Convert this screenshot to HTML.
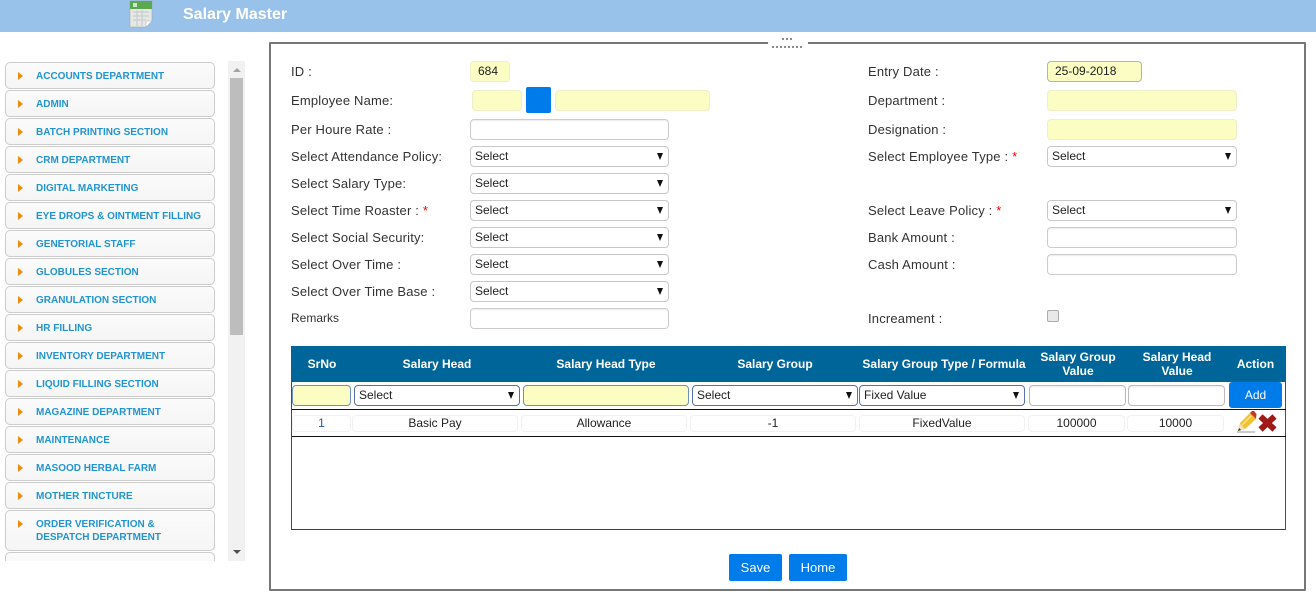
<!DOCTYPE html>
<html><head><meta charset="utf-8"><title>Salary Master</title>
<style>
html,body{margin:0;padding:0;background:#fff;width:1316px;height:596px;overflow:hidden;font-family:"Liberation Sans",sans-serif}
.a{position:absolute;box-sizing:border-box}
.l{position:absolute;font-size:13px;letter-spacing:.18px;color:#333;line-height:14px;white-space:nowrap}
.l b{color:#e00;font-weight:normal}
.i{position:absolute;box-sizing:border-box;border:1px solid #ccc;border-radius:4px;background:#fff;box-shadow:inset 0 1px 1px rgba(0,0,0,.08)}
.y{background:#fbfdc2;border:1px solid #eeeecb;box-shadow:none}
.s{position:absolute;box-sizing:border-box;border:1px solid #c8c8c8;border-radius:4px;background:#fff;height:21px;font-size:12px;color:#222;line-height:18px;padding-left:4px}
.s i{position:absolute;right:5px;top:6px;width:0;height:0;border-left:3.5px solid transparent;border-right:3.5px solid transparent;border-top:7px solid #111}
.m{position:absolute;left:5px;width:210px;height:27px;box-sizing:border-box;border:1px solid #ccc;border-radius:5px;background:linear-gradient(#fbfbfb,#f5f5f5);font-size:10px;font-weight:bold;color:#2295cf;line-height:27px;padding-left:30px;white-space:nowrap}
.m:before{content:"";position:absolute;left:12px;top:9px;width:0;height:0;border-top:4px solid transparent;border-bottom:4px solid transparent;border-left:5px solid #ef8b10}
.h{position:absolute;top:346px;height:36px;color:#fff;font-size:12px;font-weight:bold;text-align:center;line-height:14px;display:flex;align-items:center;justify-content:center}
.c{position:absolute;top:415px;height:17px;box-sizing:border-box;border:1px solid #f1f1f1;border-radius:4px;font-size:12px;color:#222;text-align:center;line-height:15px}
.b{position:absolute;box-sizing:border-box;background:#007bea;color:#fff;border-radius:2px;text-align:center;font-size:13px}
</style></head><body>

<div class="a" style="left:0;top:0;width:1316px;height:32px;background:#99c2ea"></div>
<svg class="a" style="left:129px;top:0" width="24" height="28" viewBox="0 0 24 28">
<path d="M1 1H23V21L17 27H1Z" fill="#e6e8e6" stroke="#9aa" stroke-width=".6"/>
<rect x="1" y="1" width="22" height="8" fill="#5aa850"/><rect x="4" y="3" width="4" height="4" fill="#cfe6c8"/>
<path d="M4 12H20M4 16H20M4 20H17M8 10V26M13 10V26" stroke="#c3c9cc" stroke-width="1"/>
<path d="M17 27V21H23Z" fill="#fff" stroke="#aaa" stroke-width=".5"/>
</svg>
<div class="a" style="left:183px;top:6px;font-size:16px;font-weight:bold;color:#fff;line-height:17px;white-space:nowrap">Salary Master</div>

<!-- sidebar -->
<div class="a" style="left:0;top:61px;width:220px;height:500px;overflow:hidden">
<div class="m" style="top:1px">ACCOUNTS DEPARTMENT</div>
<div class="m" style="top:29px">ADMIN</div>
<div class="m" style="top:57px">BATCH PRINTING SECTION</div>
<div class="m" style="top:85px">CRM DEPARTMENT</div>
<div class="m" style="top:113px">DIGITAL MARKETING</div>
<div class="m" style="top:141px">EYE DROPS &amp; OINTMENT FILLING</div>
<div class="m" style="top:169px">GENETORIAL STAFF</div>
<div class="m" style="top:197px">GLOBULES SECTION</div>
<div class="m" style="top:225px">GRANULATION SECTION</div>
<div class="m" style="top:253px">HR FILLING</div>
<div class="m" style="top:281px">INVENTORY DEPARTMENT</div>
<div class="m" style="top:309px">LIQUID FILLING SECTION</div>
<div class="m" style="top:337px">MAGAZINE DEPARTMENT</div>
<div class="m" style="top:365px">MAINTENANCE</div>
<div class="m" style="top:393px">MASOOD HERBAL FARM</div>
<div class="m" style="top:421px">MOTHER TINCTURE</div>
<div class="m" style="top:449px;height:41px;line-height:13px;padding-top:7px">ORDER VERIFICATION &amp;<br>DESPATCH DEPARTMENT</div>
<div class="m" style="top:491px"></div>
</div>
<div class="a" style="left:228px;top:61px;width:17px;height:500px;background:#f1f1f1"></div>
<div class="a" style="left:230px;top:78px;width:13px;height:257px;background:#bdbdbd"></div>
<div class="a" style="left:233px;top:68px;width:0;height:0;border-left:4px solid transparent;border-right:4px solid transparent;border-bottom:4px solid #a3a3a3"></div>
<div class="a" style="left:233px;top:550px;width:0;height:0;border-left:4px solid transparent;border-right:4px solid transparent;border-top:4px solid #505050"></div>

<!-- main box -->
<div class="a" style="left:269px;top:42px;width:1037px;height:549px;border:2px solid #777;border-radius:1px"></div>
<div class="a" style="left:768px;top:38px;width:40px;height:12px;background:#fff"></div>
<div class="a" style="left:782px;top:38px;width:12px;height:2px;background:repeating-linear-gradient(90deg,#8a8a8a 0 2px,transparent 2px 4px)"></div>
<div class="a" style="left:772px;top:46px;width:32px;height:2px;background:repeating-linear-gradient(90deg,#8a8a8a 0 2px,transparent 2px 4px)"></div>

<!-- left labels -->
<div class="l" style="left:291px;top:65px">ID :</div>
<div class="l" style="left:291px;top:94px">Employee Name:</div>
<div class="l" style="left:291px;top:123px">Per Houre Rate :</div>
<div class="l" style="left:291px;top:150px">Select Attendance Policy:</div>
<div class="l" style="left:291px;top:177px">Select Salary Type:</div>
<div class="l" style="left:291px;top:204px">Select Time Roaster : <b>*</b></div>
<div class="l" style="left:291px;top:231px">Select Social Security:</div>
<div class="l" style="left:291px;top:258px">Select Over Time :</div>
<div class="l" style="left:291px;top:285px">Select Over Time Base :</div>
<div class="l" style="left:291px;top:311px;font-size:12px;letter-spacing:0">Remarks</div>

<div class="i y" style="left:470px;top:61px;width:40px;height:21px;font-size:12px;line-height:18px;padding-left:7px;color:#222">684</div>
<div class="i y" style="left:472px;top:90px;width:50px;height:21px"></div>
<div class="a" style="left:526px;top:87px;width:25px;height:26px;background:#007bea;border-radius:2px"></div>
<div class="i y" style="left:555px;top:90px;width:155px;height:21px"></div>
<div class="i" style="left:470px;top:119px;width:199px;height:21px"></div>
<div class="s" style="left:470px;top:146px;width:199px">Select<i></i></div>
<div class="s" style="left:470px;top:173px;width:199px">Select<i></i></div>
<div class="s" style="left:470px;top:200px;width:199px">Select<i></i></div>
<div class="s" style="left:470px;top:227px;width:199px">Select<i></i></div>
<div class="s" style="left:470px;top:254px;width:199px">Select<i></i></div>
<div class="s" style="left:470px;top:281px;width:199px">Select<i></i></div>
<div class="i" style="left:470px;top:308px;width:199px;height:21px"></div>

<!-- right labels -->
<div class="l" style="left:868px;top:65px">Entry Date :</div>
<div class="l" style="left:868px;top:94px">Department :</div>
<div class="l" style="left:868px;top:123px">Designation :</div>
<div class="l" style="left:868px;top:150px">Select Employee Type : <b>*</b></div>
<div class="l" style="left:868px;top:204px">Select Leave Policy : <b>*</b></div>
<div class="l" style="left:868px;top:231px">Bank Amount :</div>
<div class="l" style="left:868px;top:258px">Cash Amount :</div>
<div class="l" style="left:868px;top:312px">Increament :</div>

<div class="i y" style="left:1047px;top:61px;width:95px;height:21px;border-color:#b4b4b4;font-size:12px;line-height:18px;padding-left:7px;color:#222">25-09-2018</div>
<div class="i y" style="left:1047px;top:90px;width:190px;height:21px"></div>
<div class="i y" style="left:1047px;top:119px;width:190px;height:21px"></div>
<div class="s" style="left:1047px;top:146px;width:190px">Select<i></i></div>
<div class="s" style="left:1047px;top:200px;width:190px">Select<i></i></div>
<div class="i" style="left:1047px;top:227px;width:190px;height:21px"></div>
<div class="i" style="left:1047px;top:254px;width:190px;height:21px"></div>
<div class="a" style="left:1047px;top:310px;width:12px;height:12px;border:1px solid #aaa;border-radius:2px;background:#e9e9e9"></div>

<!-- table -->
<div class="a" style="left:291px;top:346px;width:995px;height:184px;border:1px solid #006699;border-top:none;border-left-color:#1a5a80"></div>
<div class="a" style="left:291px;top:346px;width:995px;height:36px;background:#006699"></div>
<div class="h" style="left:291px;width:62px">SrNo</div>
<div class="h" style="left:353px;width:168px">Salary Head</div>
<div class="h" style="left:521px;width:170px">Salary Head Type</div>
<div class="h" style="left:691px;width:168px">Salary Group</div>
<div class="h" style="left:859px;width:170px">Salary Group Type / Formula</div>
<div class="h" style="left:1029px;width:98px">Salary Group<br>Value</div>
<div class="h" style="left:1127px;width:100px">Salary Head<br>Value</div>
<div class="h" style="left:1227px;width:57px">Action</div>

<div class="i y" style="left:292px;top:385px;width:59px;height:21px;border-color:#6f8fc0"></div>
<div class="s" style="left:354px;top:385px;width:166px;border-color:#5672a8">Select<i></i></div>
<div class="i y" style="left:523px;top:385px;width:166px;height:21px;border-color:#6f8fc0"></div>
<div class="s" style="left:692px;top:385px;width:166px;border-color:#5672a8">Select<i></i></div>
<div class="s" style="left:859px;top:385px;width:166px;border-color:#5672a8">Fixed Value<i></i></div>
<div class="i" style="left:1029px;top:385px;width:97px;height:21px;border-color:#bbb"></div>
<div class="i" style="left:1128px;top:385px;width:97px;height:21px;border-color:#bbb"></div>
<div class="b" style="left:1229px;top:382px;width:53px;height:26px;line-height:26px;font-size:12px;border-radius:3px">Add</div>

<div class="a" style="left:292px;top:409px;width:994px;height:1px;background:#111"></div>
<div class="a" style="left:292px;top:436px;width:994px;height:1px;background:#111"></div>
<div class="a" style="left:292px;top:529px;width:994px;height:1px;background:#1a4a68"></div>

<div class="c" style="left:292px;width:59px;color:#1a5a9a">1</div>
<div class="c" style="left:352px;width:166px">Basic Pay</div>
<div class="c" style="left:521px;width:166px">Allowance</div>
<div class="c" style="left:690px;width:166px">-1</div>
<div class="c" style="left:859px;width:166px">FixedValue</div>
<div class="c" style="left:1028px;width:97px">100000</div>
<div class="c" style="left:1127px;width:97px">10000</div>

<svg class="a" style="left:1236px;top:410px" width="44" height="24" viewBox="0 0 44 24">
<path d="M1 22H19" stroke="#ccc" stroke-width="2"/>
<path d="M2 21L4 13L14 3L20 9L9 19Z" fill="#f2c22e"/>
<path d="M6 15L15 6" stroke="#f9e08a" stroke-width="1.5"/>
<path d="M2 21L4 14L9 19Z" fill="#f3e1bd"/>
<path d="M2 21L3 18L5 20Z" fill="#333"/>
<path d="M14 3L16 1L18 1L20.5 4L20 9Z" fill="#c0392b"/>
<path d="M24.5 6.5L38.5 19.5M38.5 6.5L24.5 19.5" stroke="#a01818" stroke-width="6"/>
</svg>

<div class="b" style="left:729px;top:554px;width:53px;height:27px;line-height:27px">Save</div>
<div class="b" style="left:789px;top:554px;width:58px;height:27px;line-height:27px">Home</div>
</body></html>
